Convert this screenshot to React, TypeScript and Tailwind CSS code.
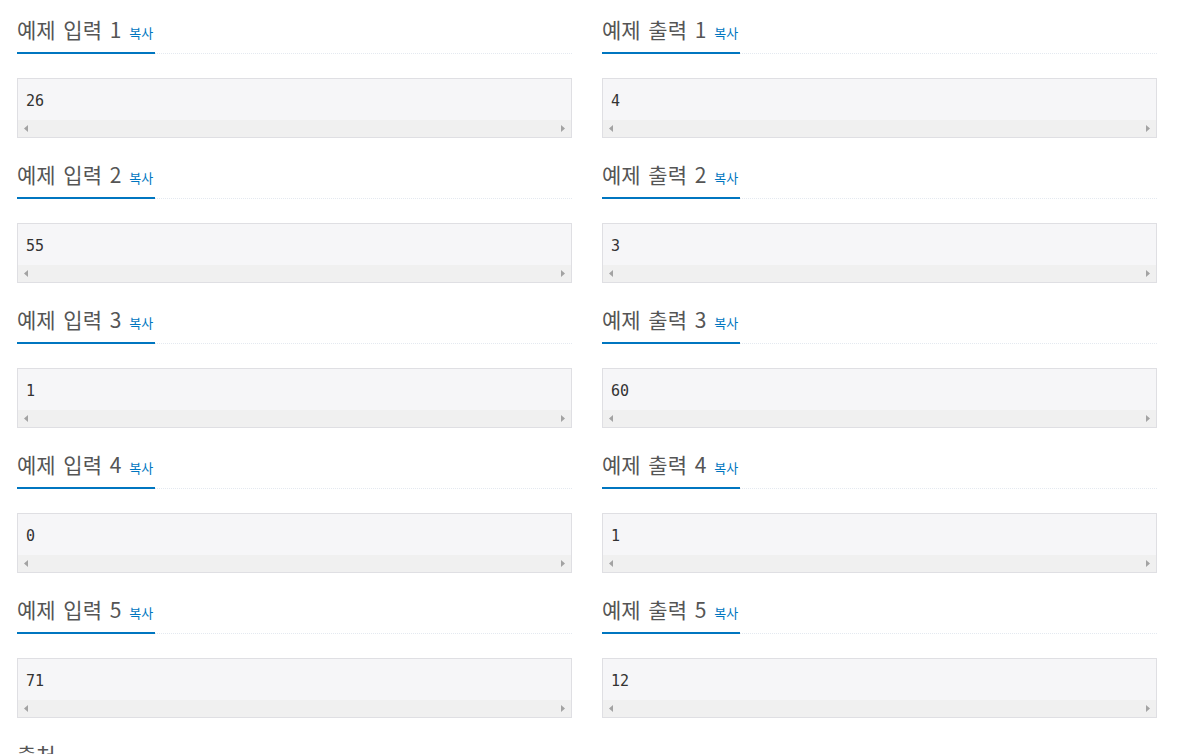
import React from "react";

const data: [string, string][] = [
  ["26", "4"],
  ["55", "3"],
  ["1", "60"],
  ["0", "1"],
  ["71", "12"],
];

function Headline({ title, copy = true }: { title: string; copy?: boolean }) {
  return (
    <div className="border-b border-dotted border-[#e4e9f0] flex">
      <h2 className="flex items-baseline h-[40px] border-b-2 border-[#0076c0] mb-[-1px] pt-[2px] pb-[10px] pr-[2px] text-[21px] leading-[26px] text-[#555] font-normal [word-spacing:3px]">
        <span>{title}</span>
        {copy && <span className="ml-[8px] text-[13px] text-[#0076c0] [word-spacing:0px]">복사</span>}
      </h2>
    </div>
  );
}

function Box({ value }: { value: string }) {
  return (
    <div className="mt-[24px] border border-[#dfdfe3] bg-[#f6f6f8]">
      <div
        className="px-[8px] pt-[11px] pb-[8px] text-[15px] leading-[22px] text-[#333]"
        style={{ fontFamily: '"DejaVu Sans Mono", "Liberation Mono", monospace' }}
      >
        {value}
      </div>
      <div className="h-[17px] bg-[#f0f0f0] flex items-center justify-between px-[6px]">
        <svg width="4" height="7" viewBox="0 0 4 7">
          <path d="M4 0 L0 3.5 L4 7 Z" fill="#a3a3a3" />
        </svg>
        <svg width="4" height="7" viewBox="0 0 4 7">
          <path d="M0 0 L4 3.5 L0 7 Z" fill="#a3a3a3" />
        </svg>
      </div>
    </div>
  );
}

export default function App() {
  return (
    <div
      className="bg-white w-[1198px] h-[754px] overflow-hidden pl-[17px] pt-[14px]"
      style={{ fontFamily: '"Noto Sans CJK KR", "Noto Sans", sans-serif' }}
    >
      <div className="flex flex-col gap-[21px]">
        {data.map(([a, b], i) => (
          <div key={i} className="grid grid-cols-[555px_555px] gap-x-[30px]">
            <div>
              <Headline title={`예제 입력 ${i + 1}`} />
              <Box value={a} />
            </div>
            <div>
              <Headline title={`예제 출력 ${i + 1}`} />
              <Box value={b} />
            </div>
          </div>
        ))}
        <div className="w-[1140px]">
          <Headline title="출처" copy={false} />
        </div>
      </div>
    </div>
  );
}
